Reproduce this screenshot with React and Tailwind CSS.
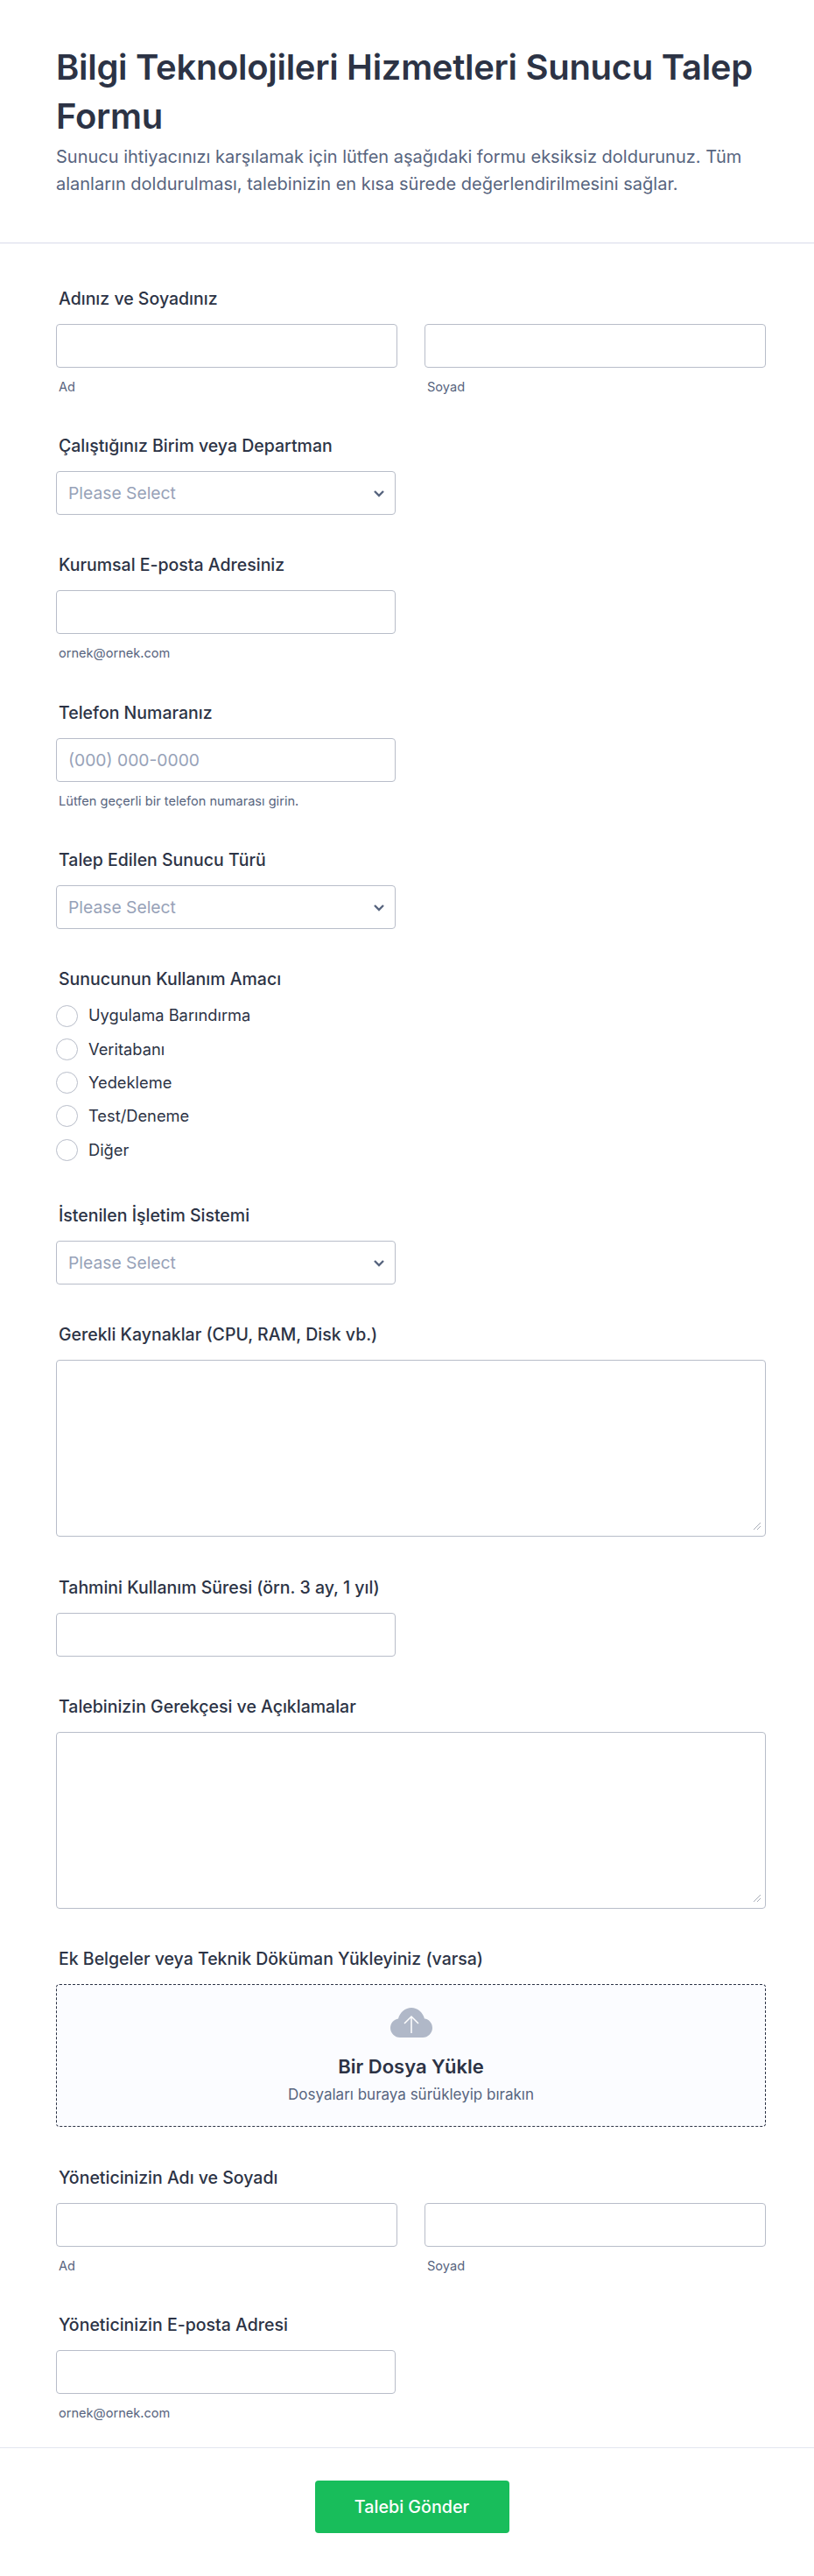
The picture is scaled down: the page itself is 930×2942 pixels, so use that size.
import React from "react";

const Label = ({ children }) => (
  <div className="h-6 pl-[3px] mb-[17px] text-[19.5px] leading-6 font-medium text-[#2c3345]">{children}</div>
);
const Sub = ({ children }) => (
  <div className="mt-[13px] pl-[3px] h-[18px] text-[14.6px] leading-[18px] text-[#57647e]">{children}</div>
);
const box = "h-[50px] rounded-[4px] border border-[#b8bdc9] bg-white";

const Field = ({ label, pb = "pb-[45px]", children }) => (
  <div className={pb}>
    <Label>{label}</Label>
    {children}
  </div>
);

const NameField = ({ label }) => (
  <Field label={label} pb="pb-[46px]">
    <div className="flex gap-[31px]">
      <div className="flex-1">
        <div className={box} />
        <Sub>Ad</Sub>
      </div>
      <div className="flex-1">
        <div className={box} />
        <Sub>Soyad</Sub>
      </div>
    </div>
  </Field>
);

const Select = ({ label }) => (
  <Field label={label}>
    <div className={`${box} w-[388px] flex items-center justify-between pl-[13px] pr-[11px]`}>
      <span className="text-[19.3px] text-[#97a2b8]">Please Select</span>
      <svg width="14" height="9" viewBox="0 0 14 9" fill="none">
        <path d="M2 2l5 5 5-5" stroke="#57647e" strokeWidth="2.4" />
      </svg>
    </div>
  </Field>
);

const TextInput = ({ label, sub, placeholder, pb }) => (
  <Field label={label} pb={pb}>
    <div className={`${box} w-[388px] flex items-center pl-[13px]`}>
      {placeholder && <span className="text-[19.3px] text-[#97a2b8]">{placeholder}</span>}
    </div>
    {sub && <Sub>{sub}</Sub>}
  </Field>
);

const TextArea = ({ label, pb }) => (
  <Field label={label} pb={pb}>
    <div className="relative h-[202px] rounded-[4px] border border-[#b8bdc9] bg-white">
      <svg className="absolute right-[4px] bottom-[6px]" width="10" height="10" viewBox="0 0 10 10" fill="none">
        <path d="M1 9l8-8M5 9l4-4" stroke="#a8adb8" strokeWidth="1" />
      </svg>
    </div>
  </Field>
);

const options = ["Uygulama Barındırma", "Veritabanı", "Yedekleme", "Test/Deneme", "Diğer"];

export default function App() {
  return (
    <div className="w-[930px] h-[2942px] bg-white overflow-hidden font-['Inter',sans-serif]">
      <header className="h-[278px] border-b border-[#d8dae9] pl-[64px] pr-[55px] pt-[49px]">
        <h1 className="text-[40px] leading-[56px] font-semibold tracking-[-0.3px] text-[#2c3345]">
          Bilgi Teknolojileri Hizmetleri Sunucu Talep Formu
        </h1>
        <p className="mt-[3px] text-[20px] leading-[31px] text-[#57647e]">
          Sunucu ihtiyacınızı karşılamak için lütfen aşağıdaki formu eksiksiz doldurunuz. Tüm alanların doldurulması, talebinizin en kısa sürede değerlendirilmesini sağlar.
        </p>
      </header>
      <main className="pl-[64px] pr-[55px] pt-[51px]">
        <NameField label="Adınız ve Soyadınız" />
        <Select label="Çalıştığınız Birim veya Departman" />
        <TextInput label="Kurumsal E-posta Adresiniz" sub="ornek@ornek.com" pb="pb-[47px]" />
        <TextInput label="Telefon Numaranız" sub="Lütfen geçerli bir telefon numarası girin." placeholder="(000) 000-0000" pb="pb-[46px]" />
        <Select label="Talep Edilen Sunucu Türü" />
        <div className="pb-[51px]">
          <div className="h-6 pl-[3px] mb-[18px] text-[19.5px] leading-6 font-medium text-[#2c3345]">Sunucunun Kullanım Amacı</div>
          <div className="flex flex-col gap-[14.33px]">
            {options.map((o) => (
              <div key={o} className="flex items-center gap-[12px] h-[24px]">
                <span className="w-[25px] h-[25px] rounded-full border border-[#b8bdc9] bg-white" />
                <span className="text-[18.3px] text-[#2c3345]">{o}</span>
              </div>
            ))}
          </div>
        </div>
        <Select label="İstenilen İşletim Sistemi" />
        <TextArea label="Gerekli Kaynaklar (CPU, RAM, Disk vb.)" pb="pb-[46px]" />
        <TextInput label="Tahmini Kullanım Süresi (örn. 3 ay, 1 yıl)" />
        <TextArea label="Talebinizin Gerekçesi ve Açıklamalar" />
        <Field label="Ek Belgeler veya Teknik Döküman Yükleyiniz (varsa)" pb="pb-[46px]">
          <div className="h-[163px] rounded-[4px] border border-dashed border-[#2c3345] bg-[#fbfcff] flex flex-col items-center pt-[26px]">
            <svg width="48" height="34" viewBox="0 0 48 34">
              <path d="M11 34C5 34 0 29 0 23c0-5 4-10 9-10.500C11 5 17 0 24 0s13 5 15 12.500c5 .5 9 5 9 10.500 0 6-5 11-11 11z" fill="#b0b8c8" />
              <path d="M24 29V10M16 18l8-8 8 8" stroke="#fff" strokeWidth="1.500" fill="none" />
            </svg>
            <div className="mt-[17px] text-[22px] leading-8 font-semibold text-[#2c3345]">Bir Dosya Yükle</div>
            <div className="mt-[4px] text-[17px] leading-6 text-[#57647e]">Dosyaları buraya sürükleyip bırakın</div>
          </div>
        </Field>
        <NameField label="Yöneticinizin Adı ve Soyadı" />
        <TextInput label="Yöneticinizin E-posta Adresi" sub="ornek@ornek.com" pb="pb-[30px]" />
      </main>
      <footer className="border-t border-[#e3e5f0] flex justify-center pl-[11px] pt-[37px]">
        <button className="w-[222px] h-[60px] rounded-[4px] bg-[#18bd5b] text-white text-[19.7px] font-medium">Talebi Gönder</button>
      </footer>
    </div>
  );
}
